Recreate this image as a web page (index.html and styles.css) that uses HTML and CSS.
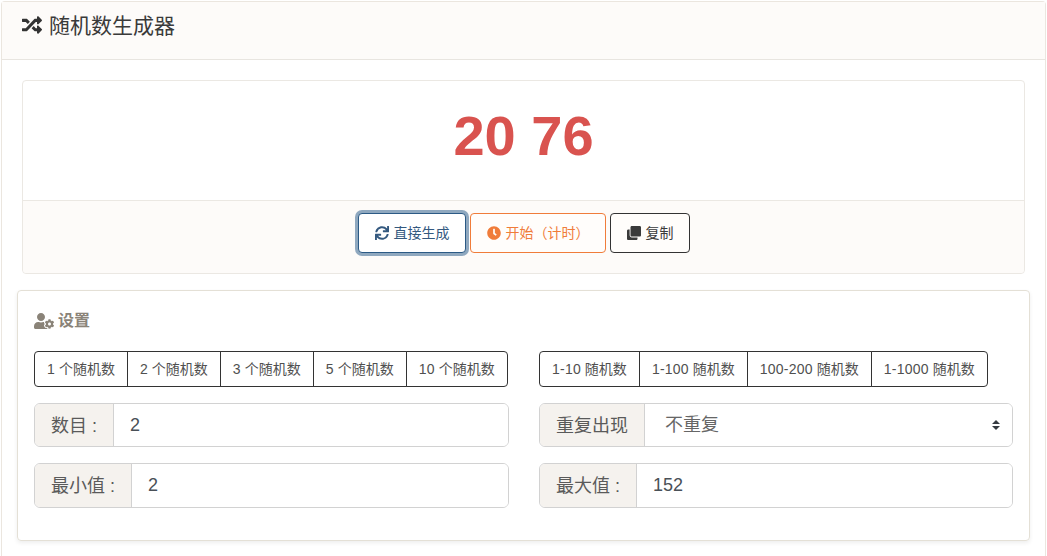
FILE: index.html
```html
<!DOCTYPE html>
<html lang="zh-CN">
<head>
<meta charset="utf-8">
<title>随机数生成器</title>
<link rel="stylesheet" href="styles.css">
</head>
<body>
<main class="page-card">
  <header class="page-head">
    <svg class="icon head-icon" viewBox="0 0 512 512"><path d="M504.971 359.029c9.373 9.373 9.373 24.569 0 33.941l-80 79.984c-15.01 15.01-40.971 4.49-40.971-16.971V416h-58.785a12.004 12.004 0 0 1-8.773-3.812l-70.556-75.596 53.333-57.143L352 336h32v-39.981c0-21.438 25.943-31.998 40.971-16.971l80 79.981zM12 176h84l52.781 56.551 53.333-57.143-70.556-75.596A11.999 11.999 0 0 0 122.785 96H12c-6.627 0-12 5.373-12 12v56c0 6.627 5.373 12 12 12zm372 0v39.984c0 21.46 25.961 31.98 40.971 16.971l80-79.984c9.373-9.373 9.373-24.569 0-33.941l-80-79.981C409.943 24.021 384 34.582 384 56.019V96h-58.785a12.004 12.004 0 0 0-8.773 3.812L96 336H12c-6.627 0-12 5.373-12 12v56c0 6.627 5.373 12 12 12h110.785c3.326 0 6.503-1.381 8.773-3.812L352 176h32z"/></svg>
    <h1 class="page-title">随机数生成器</h1>
  </header>
  <div class="page-body">
    <section class="result-card">
      <div class="result-value">20 76</div>
      <div class="result-actions">
        <button class="btn btn-blue" type="button"><svg class="icon" viewBox="0 0 512 512"><path d="M440.65 12.57l4 82.77A247.16 247.16 0 0 0 255.83 8C134.73 8 33.91 94.92 12.29 209.82A12 12 0 0 0 24.09 224h49.05a12 12 0 0 0 11.67-9.26 175.91 175.91 0 0 1 317-56.94l-101.46-4.86a12 12 0 0 0-12.57 12v47.41a12 12 0 0 0 12 12H500a12 12 0 0 0 12-12V12a12 12 0 0 0-12-12h-47.37a12 12 0 0 0-11.98 12.57zM255.83 432a175.61 175.61 0 0 1-146-77.8l101.8 4.87a12 12 0 0 0 12.57-12v-47.4a12 12 0 0 0-12-12H12a12 12 0 0 0-12 12V500a12 12 0 0 0 12 12h47.35a12 12 0 0 0 12-12.6l-4.15-82.57A247.17 247.17 0 0 0 255.83 504c121.11 0 221.93-86.92 243.55-201.82a12 12 0 0 0-11.8-14.18h-49.05a12 12 0 0 0-11.67 9.26A175.86 175.86 0 0 1 255.83 432z"/></svg><span class="btn-text">直接生成</span></button>
        <button class="btn btn-orange" type="button"><svg class="icon" viewBox="0 0 512 512"><path d="M256,8C119,8,8,119,8,256S119,504,256,504,504,393,504,256,393,8,256,8Zm92.49,313h0l-20,25a16,16,0,0,1-22.49,2.5h0l-67-49.72a40,40,0,0,1-15-31.23V112a16,16,0,0,1,16-16h32a16,16,0,0,1,16,16V256l58,42.5A16,16,0,0,1,348.49,321Z"/></svg><span class="btn-text">开始（计时）</span></button>
        <button class="btn btn-dark" type="button"><svg class="icon" viewBox="0 0 512 512"><path d="M464 0c26.51 0 48 21.49 48 48v288c0 26.51-21.49 48-48 48H176c-26.51 0-48-21.49-48-48V48c0-26.51 21.49-48 48-48h288M176 416c-44.112 0-80-35.888-80-80V128H48c-26.51 0-48 21.49-48 48v288c0 26.51 21.49 48 48 48h288c26.51 0 48-21.49 48-48v-48H176z"/></svg><span class="btn-text">复制</span></button>
      </div>
    </section>
    <section class="settings-card">
      <h2 class="settings-title"><svg class="icon settings-icon" viewBox="0 0 640 512"><path d="M610.5 373.3c2.6-14.1 2.6-28.5 0-42.6l25.8-14.9c3-1.7 4.3-5.2 3.3-8.5-6.7-21.6-18.2-41.2-33.2-57.4-2.3-2.5-6-3.1-9-1.4l-25.8 14.9c-10.9-9.3-23.4-16.5-36.9-21.3v-29.8c0-3.4-2.4-6.4-5.7-7.1-22.3-5-45-4.8-66.2 0-3.3.7-5.7 3.7-5.7 7.1v29.8c-13.5 4.8-26 12-36.9 21.3l-25.8-14.9c-2.9-1.7-6.7-1.1-9 1.4-15 16.2-26.5 35.8-33.2 57.4-1 3.3.4 6.8 3.3 8.5l25.8 14.9c-2.6 14.1-2.6 28.5 0 42.6l-25.8 14.9c-3 1.7-4.3 5.2-3.3 8.5 6.7 21.6 18.2 41.1 33.2 57.4 2.3 2.5 6 3.1 9 1.4l25.8-14.9c10.9 9.3 23.4 16.5 36.9 21.3v29.8c0 3.4 2.4 6.4 5.7 7.1 22.3 5 45 4.8 66.2 0 3.3-.7 5.7-3.7 5.7-7.1v-29.8c13.5-4.8 26-12 36.9-21.3l25.8 14.9c2.9 1.7 6.7 1.1 9-1.4 15-16.2 26.5-35.8 33.2-57.4 1-3.3-.4-6.8-3.3-8.5l-25.8-14.9zM496 400.5c-26.8 0-48.5-21.8-48.5-48.5s21.8-48.5 48.5-48.5 48.5 21.8 48.5 48.5-21.7 48.5-48.5 48.5zM224 256c70.7 0 128-57.3 128-128S294.7 0 224 0 96 57.3 96 128s57.3 128 128 128zm201.2 226.5c-2.3-1.2-4.6-2.6-6.8-3.9l-7.9 4.6c-6 3.4-12.8 5.3-19.6 5.3-10.9 0-21.4-4.6-28.9-12.6-18.3-19.8-32.3-43.9-40.2-69.6-5.5-17.7 1.9-36.4 17.9-45.7l7.9-4.6c-.1-2.6-.1-5.2 0-7.8l-7.9-4.6c-16-9.2-23.4-28-17.9-45.7.9-2.9 2.2-5.8 3.2-8.7-3.8-.3-7.5-1.2-11.4-1.2h-16.7c-22.2 10.2-46.9 16-72.9 16s-50.6-5.8-72.9-16h-16.7C60.2 288 0 348.2 0 422.4V464c0 26.5 21.5 48 48 48h352c10.1 0 19.5-3.2 27.2-8.5-1.2-3.8-2-7.7-2-11.8v-9.2z"/></svg><span class="settings-text">设置</span></h2>
      <div class="settings-grid">
        <div class="group-btns">
          <button class="group-btn" type="button"><span class="num">1</span> 个随机数</button>
          <button class="group-btn" type="button"><span class="num">2</span> 个随机数</button>
          <button class="group-btn" type="button"><span class="num">3</span> 个随机数</button>
          <button class="group-btn" type="button"><span class="num">5</span> 个随机数</button>
          <button class="group-btn" type="button"><span class="num">10</span> 个随机数</button>
        </div>
        <div class="group-btns">
          <button class="group-btn" type="button"><span class="num">1-10</span> 随机数</button>
          <button class="group-btn" type="button"><span class="num">1-100</span> 随机数</button>
          <button class="group-btn" type="button"><span class="num">100-200</span> 随机数</button>
          <button class="group-btn" type="button"><span class="num">1-1000</span> 随机数</button>
        </div>
        <label class="field">
          <span class="field-label">数目 :</span>
          <input class="field-control" type="text" value="2">
        </label>
        <label class="field">
          <span class="field-label">重复出现</span>
          <select class="field-control field-select"><option>不重复</option></select>
        </label>
        <label class="field field-tall">
          <span class="field-label">最小值 :</span>
          <input class="field-control" type="text" value="2">
        </label>
        <label class="field field-tall">
          <span class="field-label">最大值 :</span>
          <input class="field-control" type="text" value="152">
        </label>
      </div>
    </section>
  </div>
</main>
</body>
</html>
```

FILE: styles.css
```css
* { box-sizing: border-box; }

html { height: 100%; }

body {
  margin: 0;
  height: 556px;
  padding: 1px 1px 0;
  overflow: hidden;
  background: #fff;
  color: #333;
  font-family: "Liberation Sans", "Noto Sans CJK SC", sans-serif;
  font-size: 14px;
}

.icon { display: block; flex: none; width: 14px; height: 14px; fill: currentColor; }

.page-card {
  height: 100%;
  border: 1px solid #ebe6df;
  border-bottom: 0;
  border-radius: 4px 4px 0 0;
  background: #fff;
}

.page-head {
  display: flex;
  align-items: center;
  gap: 7px;
  height: 58px;
  padding: 0 20px 11px;
  background: #fdfbf9;
  border-bottom: 1px solid #e8e5e0;
}

.head-icon { width: 20px; height: 20px; color: #333; }

.page-title { margin: 0 0 3px; font-size: 21px; font-weight: 400; color: #3a3a3a; }

.page-body { padding: 20px 20px 0; }

.result-card {
  border: 1px solid #ebe8e3;
  border-radius: 4px;
  height: 194px;
  display: flex;
  flex-direction: column;
}

.result-value {
  height: 119px;
  display: flex;
  align-items: center;
  justify-content: center;
  font-size: 56px;
  font-weight: 700;
  color: #d9534f;
  padding-bottom: 11px;
}

.result-actions {
  flex: 1;
  display: flex;
  justify-content: center;
  align-items: flex-start;
  gap: 4px;
  padding-top: 12px;
  background: #fdfbf9;
  border-top: 1px solid #ebe8e3;
  border-radius: 0 0 4px 4px;
}

.btn {
  display: flex;
  align-items: center;
  justify-content: center;
  gap: 5px;
  height: 40px;
  padding: 0 15px 0 16px;
  background: #fff;
  border: 1px solid #333;
  border-radius: 4px;
  font: inherit;
  color: #3a3a3a;
}

.btn-text { position: relative; top: -1px; }

.btn-blue {
  color: #34597f;
  border-color: #2c5a85;
  box-shadow: 0 0 0 3px #8fa8bf;
}

.btn-orange { color: #f07c3a; border-color: #f07c3a; background: #fffdfb; }
.btn-dark { background: #fffdfb; }

.settings-card {
  margin: 16px -5px 0;
  height: 251px;
  padding: 16px;
  border: 1px solid #e4e0d6;
  border-radius: 4px;
  box-shadow: 0 2px 4px rgba(0, 0, 0, .07);
}

.settings-title {
  display: flex;
  align-items: center;
  gap: 4px;
  height: 28px;
  margin: 0 0 16px;
  font-size: 16px;
  font-weight: 700;
  color: #8a8378;
}

.settings-text { position: relative; top: -2px; }

.settings-icon { width: 20px; height: 16px; }

.settings-grid {
  display: grid;
  grid-template-columns: 475px 474px;
  column-gap: 30px;
  row-gap: 16px;
}

.group-btns { display: flex; }

.group-btn {
  height: 36px;
  padding: 0 12px 2px;
  margin-right: -1px;
  background: #fff;
  border: 1px solid #333;
  font: inherit;
  color: #505050;
  white-space: nowrap;
}

.num { letter-spacing: .24px; }

.group-btn:first-child { border-radius: 4px 0 0 4px; }
.group-btn:last-child { border-radius: 0 4px 4px 0; margin-right: 0; }

.field {
  display: flex;
  height: 44px;
  border: 1px solid #d2d2d2;
  border-radius: 6px;
  font-size: 18px;
  overflow: hidden;
}

.field-tall { height: 45px; }

.field-label {
  display: flex;
  align-items: center;
  padding: 0 16px 3px;
  background: #f5f2ee;
  border-right: 1px solid #d2d2d2;
  color: #5a5a5a;
  white-space: nowrap;
}

.field-control {
  flex: 1;
  min-width: 0;
  padding: 0 16px;
  border: 0;
  background: #fff;
  font: inherit;
  color: #495057;
}

.field-select {
  appearance: none;
  padding: 0 20px;
  color: #666;
  background: #fff url("data:image/svg+xml,%3csvg xmlns='http://www.w3.org/2000/svg' viewBox='0 0 4 5'%3e%3cpath fill='%23343a40' d='M2 0L0 2h4zm0 5L0 3h4z'/%3e%3c/svg%3e") no-repeat right 12px center / 8px 10px;
}
```
